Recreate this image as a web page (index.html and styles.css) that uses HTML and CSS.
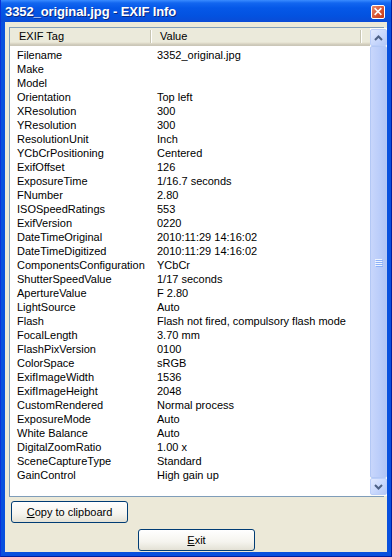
FILE: index.html
```html
<!DOCTYPE html>
<html>
<head>
<meta charset="utf-8">
<link rel="stylesheet" href="styles.css">
</head>
<body>
<div class="window">
  <div class="titlebar">
    <span class="title">3352_original.jpg - EXIF Info</span>
    <span class="close"><svg width="13" height="13" viewBox="0 0 13 13"><path d="M3.5 3.5 L9.5 9.5 M9.5 3.5 L3.5 9.5" stroke="#fff" stroke-width="1.8" stroke-linecap="square"/></svg></span>
  </div>
  <div class="client">
    <div class="listview">
      <div class="listmain">
        <div class="header">
          <div class="hcell c1">EXIF Tag</div>
          <div class="hcell c2">Value</div>
          <div class="hcell c3"></div>
        </div>
        <div class="rows">
          <div class="row"><span class="k">Filename</span><span class="v">3352_original.jpg</span></div>
          <div class="row"><span class="k">Make</span><span class="v"></span></div>
          <div class="row"><span class="k">Model</span><span class="v"></span></div>
          <div class="row"><span class="k">Orientation</span><span class="v">Top left</span></div>
          <div class="row"><span class="k">XResolution</span><span class="v">300</span></div>
          <div class="row"><span class="k">YResolution</span><span class="v">300</span></div>
          <div class="row"><span class="k">ResolutionUnit</span><span class="v">Inch</span></div>
          <div class="row"><span class="k">YCbCrPositioning</span><span class="v">Centered</span></div>
          <div class="row"><span class="k">ExifOffset</span><span class="v">126</span></div>
          <div class="row"><span class="k">ExposureTime</span><span class="v">1/16.7 seconds</span></div>
          <div class="row"><span class="k">FNumber</span><span class="v">2.80</span></div>
          <div class="row"><span class="k">ISOSpeedRatings</span><span class="v">553</span></div>
          <div class="row"><span class="k">ExifVersion</span><span class="v">0220</span></div>
          <div class="row"><span class="k">DateTimeOriginal</span><span class="v">2010:11:29 14:16:02</span></div>
          <div class="row"><span class="k">DateTimeDigitized</span><span class="v">2010:11:29 14:16:02</span></div>
          <div class="row"><span class="k">ComponentsConfiguration</span><span class="v">YCbCr</span></div>
          <div class="row"><span class="k">ShutterSpeedValue</span><span class="v">1/17 seconds</span></div>
          <div class="row"><span class="k">ApertureValue</span><span class="v">F 2.80</span></div>
          <div class="row"><span class="k">LightSource</span><span class="v">Auto</span></div>
          <div class="row"><span class="k">Flash</span><span class="v">Flash not fired, compulsory flash mode</span></div>
          <div class="row"><span class="k">FocalLength</span><span class="v">3.70 mm</span></div>
          <div class="row"><span class="k">FlashPixVersion</span><span class="v">0100</span></div>
          <div class="row"><span class="k">ColorSpace</span><span class="v">sRGB</span></div>
          <div class="row"><span class="k">ExifImageWidth</span><span class="v">1536</span></div>
          <div class="row"><span class="k">ExifImageHeight</span><span class="v">2048</span></div>
          <div class="row"><span class="k">CustomRendered</span><span class="v">Normal process</span></div>
          <div class="row"><span class="k">ExposureMode</span><span class="v">Auto</span></div>
          <div class="row"><span class="k">White Balance</span><span class="v">Auto</span></div>
          <div class="row"><span class="k">DigitalZoomRatio</span><span class="v">1.00 x</span></div>
          <div class="row"><span class="k">SceneCaptureType</span><span class="v">Standard</span></div>
          <div class="row"><span class="k">GainControl</span><span class="v">High gain up</span></div>
        </div>
      </div>
      <div class="scrollbar">
        <div class="sbtn"><svg width="9" height="6" viewBox="0 0 9 6"><path d="M1 5 L4.5 1.5 L8 5" fill="none" stroke="#4D6185" stroke-width="2"/></svg></div>
        <div class="thumb"><div class="grip"><i></i><i></i><i></i><i></i></div></div>
        <div class="sbtn"><svg width="9" height="6" viewBox="0 0 9 6"><path d="M1 1 L4.5 4.5 L8 1" fill="none" stroke="#4D6185" stroke-width="2"/></svg></div>
      </div>
    </div>
    <div class="btnrow left"><button class="btn"><u>C</u>opy to clipboard</button></div>
    <div class="btnrow center"><button class="btn"><u>E</u>xit</button></div>
  </div>
</div>
</body>
</html>
```
FILE: styles.css
```css
* { box-sizing: border-box; }
html, body { margin: 0; padding: 0; }
body { width: 392px; height: 557px; overflow: hidden; font-family: Tahoma, "Liberation Sans", Arial, sans-serif; font-size: 11px; }
.window {
  width: 392px; height: 557px;
  background: #0850DE;
  display: flex; flex-direction: column;
  padding: 0 4px 4px 4px;
  border-left: 1px solid #0831D9; border-right: 1px solid #001EA0; border-bottom: 1px solid #001EA0;
}
.titlebar {
  height: 22px; flex: none;
  margin: 0 -4px;
  background: linear-gradient(#3A8CFF 0px, #1266F0 3px, #0558E8 8px, #0352E0 16px, #0A4BD6 22px);
  display: flex; align-items: center; justify-content: space-between;
  padding: 0 6px 0 4px;
}
.title { color: #fff; font-weight: bold; font-size: 13px; font-family: "Liberation Sans", Arial, sans-serif; text-shadow: 1px 1px 0 #0A2880; letter-spacing: -0.1px; }
.close {
  width: 14px; height: 14px; margin-top: 1px;
  border: 1px solid #fff; border-radius: 2px;
  background: linear-gradient(135deg, #E88A6C, #D4502E 60%, #C23A1A);
  display: flex; align-items: center; justify-content: center;
}
.client {
  flex: 1; background: #ECE9D8;
  display: flex; flex-direction: column;
  padding: 5px 3px 0 4px;
}
.listview {
  height: 470px;
  border: 1px solid #7F9DB9;
  background: #fff;
  display: flex;
}
.listmain { flex: 1; display: flex; flex-direction: column; }
.header {
  height: 18px; display: flex;
  background: linear-gradient(#EBEADB 0, #EBEADB 14px, #E2DECD 15px, #D6D2C2 16px, #CBC7B8 17px);
}
.hcell { height: 15px; line-height: 15px; padding-left: 9px; color: #000; }
.c1 { width: 141px; border-right: 1px solid #C7C5B2; box-shadow: 1px 0 0 #fff; margin-top: 2px; line-height: 13px; height: 13px; }
.c2 { width: 210px; border-right: 1px solid #C7C5B2; box-shadow: 1px 0 0 #fff; margin-top: 2px; line-height: 13px; height: 13px; padding-left: 9px; }
.c3 { flex: 1; }
.rows { padding-top: 2px; }
.row { height: 14px; line-height: 14px; display: flex; white-space: nowrap; }
.k { width: 140px; padding-left: 7px; flex: none; }
.v { padding-left: 7px; }
.scrollbar {
  width: 17px; flex: none;
  background: #FDFDFA;
  display: flex; flex-direction: column;
  padding: 1px 0;
}
.sbtn {
  height: 17px; flex: none;
  border: 1px solid #BBCEF9;
  border-radius: 2px;
  background: linear-gradient(135deg, #E2EAFE, #C6D6FC 60%, #B4C8F6);
  display: flex; align-items: center; justify-content: center;
}
.thumb {
  flex: 1;
  border: 1px solid #B3C8F5; border-radius: 2px;
  background: linear-gradient(90deg, #C8D6FB, #BCCEFA 50%, #B0C4F6);
  display: flex; align-items: center; justify-content: center;
}
.grip { display: flex; flex-direction: column; gap: 1px; }
.grip i { display: block; width: 7px; height: 1px; background: #EEF4FE; box-shadow: 1px 1px 0 #8CB0F8; }
.btnrow { display: flex; }
.btnrow.left { padding: 4px 0 0 2px; }
.btnrow.center { justify-content: center; padding-top: 6px; }
.btn {
  width: 117px; height: 22px;
  border: 1px solid #003C74; border-radius: 3px;
  background: linear-gradient(#FFFFFF, #F5F4EE 60%, #E3E1D5);
  font-family: Tahoma, "Liberation Sans", Arial, sans-serif; font-size: 11px; color: #000;
  padding: 0; margin: 0;
}
.btn u { text-decoration: underline; }
```
